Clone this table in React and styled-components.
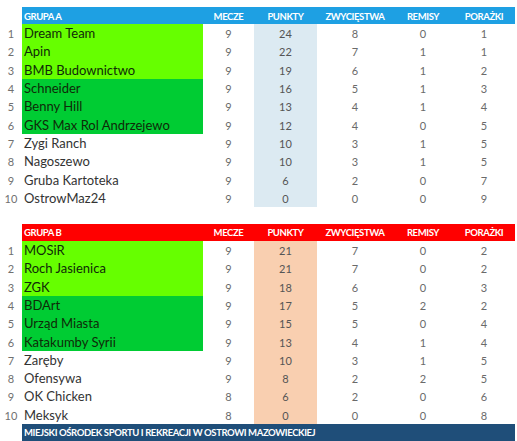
import React from "react";
import styled, { createGlobalStyle } from "styled-components";

const GlobalStyle = createGlobalStyle`
  body {
    margin: 0;
    background: #ffffff;
    font-family: Lato, "Open Sans", sans-serif;
  }
`;

const COLS = "22px 181px 51px 63px 76px 60px 62px";

const Page = styled.div`
  width: 517px;
  height: 441px;
  padding-top: 7px;
  box-sizing: border-box;
  display: flex;
  flex-direction: column;
  gap: 17px;
  overflow: hidden;
`;

const Table = styled.div`
  display: flex;
  flex-direction: column;
`;

const HeaderRow = styled.div`
  display: grid;
  grid-template-columns: ${COLS};
  height: 17px;
  align-items: stretch;
`;

const HeadCell = styled.div`
  background: ${(p) => p.$bg};
  color: #ffffff;
  font-size: 9.5px;
  font-weight: 700;
  letter-spacing: -0.4px;
  display: flex;
  align-items: center;
  justify-content: ${(p) => (p.$left ? "flex-start" : "center")};
  padding-left: ${(p) => (p.$left ? "2px" : "0")};
  padding-top: 1px;
`;

const Row = styled.div`
  display: grid;
  grid-template-columns: ${COLS};
  height: 18.3px;
  align-items: stretch;
`;

const NumCell = styled.div`
  color: #707070;
  font-size: 11px;
  display: flex;
  align-items: center;
  justify-content: center;
  padding-top: 1px;
`;

const NameCell = styled.div`
  background: ${(p) =>
    p.$tone === "top" ? "#66ff00" : p.$tone === "mid" ? "#00cc33" : "transparent"};
  color: ${(p) => (p.$tone ? "#0f2a08" : "#333333")};
  font-size: 13px;
  display: flex;
  align-items: center;
  padding-left: 2px;
  white-space: nowrap;
`;

const ValCell = styled.div`
  background: ${(p) => p.$bg || "transparent"};
  color: ${(p) => (p.$bg ? "#555555" : "#6a6a6a")};
  font-size: 11px;
  display: flex;
  align-items: center;
  justify-content: center;
  padding-top: 1px;
`;

const Footer = styled.div`
  margin-left: 22px;
  width: 493px;
  height: 18px;
  margin-top: -17px;
  background: #1f4e79;
  color: #ffffff;
  font-size: 9.5px;
  font-weight: 700;
  letter-spacing: -0.4px;
  display: flex;
  align-items: center;
  padding-left: 2px;
  box-sizing: border-box;
`;

const groupA = [
  ["Dream Team", 9, 24, 8, 0, 1],
  ["Apin", 9, 22, 7, 1, 1],
  ["BMB Budownictwo", 9, 19, 6, 1, 2],
  ["Schneider", 9, 16, 5, 1, 3],
  ["Benny Hill", 9, 13, 4, 1, 4],
  ["GKS Max Rol Andrzejewo", 9, 12, 4, 0, 5],
  ["Zygi Ranch", 9, 10, 3, 1, 5],
  ["Nagoszewo", 9, 10, 3, 1, 5],
  ["Gruba Kartoteka", 9, 6, 2, 0, 7],
  ["OstrowMaz24", 9, 0, 0, 0, 9],
];

const groupB = [
  ["MOSiR", 9, 21, 7, 0, 2],
  ["Roch Jasienica", 9, 21, 7, 0, 2],
  ["ZGK", 9, 18, 6, 0, 3],
  ["BDArt", 9, 17, 5, 2, 2],
  ["Urząd Miasta", 9, 15, 5, 0, 4],
  ["Katakumby Syrii", 9, 13, 4, 1, 4],
  ["Zaręby", 9, 10, 3, 1, 5],
  ["Ofensywa", 9, 8, 2, 2, 5],
  ["OK Chicken", 8, 6, 2, 0, 6],
  ["Meksyk", 8, 0, 0, 0, 8],
];

const tone = (i) => (i < 3 ? "top" : i < 6 ? "mid" : undefined);

const Group = ({ title, color, pointsBg, rows }) => (
  <Table>
    <HeaderRow>
      <div />
      <HeadCell $bg={color} $left>
        {title}
      </HeadCell>
      <HeadCell $bg={color}>MECZE</HeadCell>
      <HeadCell $bg={color}>PUNKTY</HeadCell>
      <HeadCell $bg={color}>ZWYCIĘSTWA</HeadCell>
      <HeadCell $bg={color}>REMISY</HeadCell>
      <HeadCell $bg={color}>PORAŻKI</HeadCell>
    </HeaderRow>
    {rows.map(([name, m, p, w, d, l], i) => (
      <Row key={name}>
        <NumCell>{i + 1}</NumCell>
        <NameCell $tone={tone(i)}>{name}</NameCell>
        <ValCell>{m}</ValCell>
        <ValCell $bg={pointsBg}>{p}</ValCell>
        <ValCell>{w}</ValCell>
        <ValCell>{d}</ValCell>
        <ValCell>{l}</ValCell>
      </Row>
    ))}
  </Table>
);

export default function App() {
  return (
    <>
      <GlobalStyle />
      <Page>
        <Group title="GRUPA A" color="#1ea0e3" pointsBg="#dceaf2" rows={groupA} />
        <Group title="GRUPA B" color="#ff0000" pointsBg="#f9cfb0" rows={groupB} />
        <Footer>MIEJSKI OŚRODEK SPORTU I REKREACJI W OSTROWI MAZOWIECKIEJ</Footer>
      </Page>
    </>
  );
}
